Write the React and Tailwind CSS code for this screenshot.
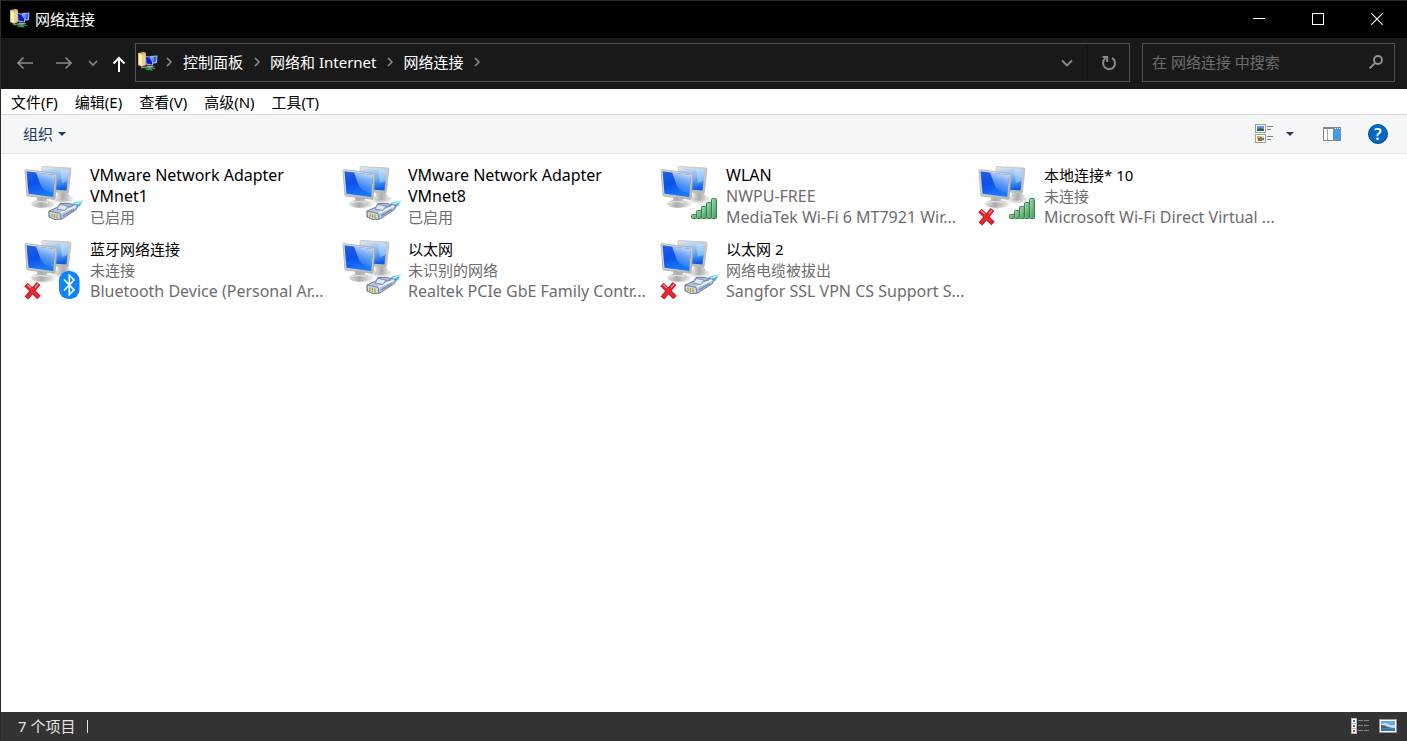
import React, { useState } from "react";
import clsx from "clsx";

const crumbs = ["控制面板", "网络和 Internet", "网络连接"];

const menus = ["文件(F)", "编辑(E)", "查看(V)", "高级(N)", "工具(T)"];

const connections = [
  { name: "VMware Network Adapter VMnet1", status: "已启用", badge: "cable" },
  { name: "VMware Network Adapter VMnet8", status: "已启用", badge: "cable" },
  { name: "WLAN", status: "NWPU-FREE", device: "MediaTek Wi-Fi 6 MT7921 Wir...", badge: "wifi" },
  { name: "本地连接* 10", status: "未连接", device: "Microsoft Wi-Fi Direct Virtual ...", badge: "wifi", off: true },
  { name: "蓝牙网络连接", status: "未连接", device: "Bluetooth Device (Personal Ar...", badge: "bluetooth", off: true },
  { name: "以太网", status: "未识别的网络", device: "Realtek PCIe GbE Family Contr...", badge: "cable" },
  { name: "以太网 2", status: "网络电缆被拔出", device: "Sangfor SSL VPN CS Support S...", badge: "cable", off: true },
];

// Latin-only lines are set one size up so they look as large as the Chinese ones
const textSize = (text) => (/^[\x20-\x7e]+$/.test(text) ? "text-[16px]" : "text-[15px]");

function IconDefs() {
  return (
    <svg width="0" height="0" className="absolute" aria-hidden="true">
      <defs>
        <linearGradient id="screen" x1="0" y1="0" x2="0.3" y2="1">
          <stop offset="0" stopColor="#2a62e0" />
          <stop offset="0.5" stopColor="#0a50ea" />
          <stop offset="1" stopColor="#1a78fa" />
        </linearGradient>
        <linearGradient id="screenBack" x1="0.2" y1="0" x2="0.4" y2="1">
          <stop offset="0" stopColor="#c6e0fa" />
          <stop offset="0.5" stopColor="#6fb0f4" />
          <stop offset="1" stopColor="#0c5ce8" />
        </linearGradient>
        <linearGradient id="shine" x1="0.3" y1="0" x2="0" y2="1">
          <stop offset="0" stopColor="#c4defb" stopOpacity="0.9" />
          <stop offset="0.5" stopColor="#7db4f8" stopOpacity="0.6" />
          <stop offset="1" stopColor="#3f8ffa" stopOpacity="0.1" />
        </linearGradient>
        <linearGradient id="frame" x1="0" y1="0" x2="1" y2="1">
          <stop offset="0" stopColor="#e6e6e4" />
          <stop offset="1" stopColor="#b4b4b4" />
        </linearGradient>
        <linearGradient id="stand" x1="0" y1="0" x2="1" y2="0">
          <stop offset="0" stopColor="#dedede" />
          <stop offset="0.5" stopColor="#acacac" />
          <stop offset="1" stopColor="#dadada" />
        </linearGradient>
        <linearGradient id="bar" x1="0" y1="0" x2="1" y2="1">
          <stop offset="0" stopColor="#a9dcb0" />
          <stop offset="1" stopColor="#3f9a5c" />
        </linearGradient>
        <radialGradient id="shadow">
          <stop offset="0" stopColor="#000" stopOpacity="0.35" />
          <stop offset="1" stopColor="#000" stopOpacity="0" />
        </radialGradient>
      </defs>
    </svg>
  );
}

function CableBadge() {
  return (
    <g strokeLinejoin="round">
      <path d="M46 43 L50 38.500 L59 36.500 L56 42 L50 46 Z" fill="#4db9dd" />
      <path d="M50 40.500 L58 37.500" stroke="#b8ecf8" strokeWidth="1.500" />
      <path d="M25 47 L34 43 L36 39.500 L45 39.500 L53.500 41.500 L52.500 45.500 L38 55 L31 55.500 L25 53 Z" fill="#b3c3df" stroke="#6e81a3" />
      <path d="M25 47 L36 49.500 L37 55 L31 55.500 L25.500 53 Z" fill="#d5dade" stroke="#75849e" />
      <path d="M36.500 49 L52 42" stroke="#f3f7fc" strokeWidth="1.500" />
      <path d="M33 45 L36 40.500 L44 42 L41 46.500 Z" fill="#dfe8f5" stroke="#7e90b0" />
      <path d="M39 52 L50 45.500 M44 43 L49 41.500" stroke="#7b92bd" strokeWidth="1.500" />
      <path d="M28 49.500 v3.500 M30.500 50 v4 M33 50.500 v4" stroke="#b5a63c" strokeWidth="1.400" />
    </g>
  );
}

function WifiBadge() {
  return (
    <g fill="url(#bar)" stroke="#35824e">
      <rect x="31.500" y="50.500" width="5" height="4" rx="1" />
      <rect x="36.500" y="46.500" width="5" height="8" rx="1" />
      <rect x="41.500" y="42.500" width="5" height="12" rx="1" />
      <rect x="46.500" y="38.500" width="5" height="16" rx="1" />
      <rect x="51.500" y="34.500" width="5" height="20" rx="1" />
    </g>
  );
}

function BluetoothBadge() {
  return (
    <g>
      <rect x="35" y="33" width="20.500" height="28" rx="9.500" fill="#0a84ff" />
      <path d="M40 41.500 L50 52 L45.300 56.500 V37.500 L50 42 L40 52.500" fill="none" stroke="#fff" strokeWidth="1.700" />
    </g>
  );
}

function ConnectionIcon({ badge, off }) {
  return (
    <svg viewBox="0 0 60 64" className="h-16 w-[60px] shrink-0" aria-hidden="true">
      <ellipse cx="39" cy="35" rx="12" ry="5" fill="url(#shadow)" />
      <path d="M33 27 L42 27 L46 32 Q43 36 34 35 Z" fill="url(#stand)" />
      <path d="M18 3.500 Q18 2.500 19 2.500 L46 4 Q47 4 47 5 L44.500 28 Q44.400 29 43.400 29 L20 27 Z" fill="url(#frame)" stroke="#b9b9b7" strokeWidth="0.700" />
      <path d="M19.500 4.500 L44.800 5.800 L42.500 26.500 L22 25 Z" fill="url(#screenBack)" />
      <path d="M36 5.400 L44.800 5.800 L43.500 17 L38 19 Z" fill="#e9f5ff" opacity="0.35" />
      <ellipse cx="20" cy="40" rx="13" ry="5" fill="url(#shadow)" />
      <path d="M13 33 L23 34 L23 37 Q30 39 26 42 Q20 45 11 43 Q4 40 9 37.500 L13 36 Z" fill="url(#stand)" />
      <path d="M8.500 39 Q15 36.500 24 38.500" fill="none" stroke="#efefef" />
      <path d="M1 6.500 Q1 5.500 2 5.600 L32 9.400 Q33.200 9.600 33 10.800 L31 34.400 Q30.900 35.500 29.800 35.300 L4 32 Q3 31.900 2.900 31 Z" fill="url(#frame)" stroke="#a9a9a7" strokeWidth="0.800" />
      <path d="M2.500 7.300 L31 11 L29.200 33 L4.500 29.800 Z" fill="url(#screen)" />
      <path d="M12 8.500 L31 11 L29.600 29 Q20 28 17 22 Z" fill="url(#shine)" />
      {badge === "cable" && <CableBadge />}
      {badge === "wifi" && <WifiBadge />}
      {badge === "bluetooth" && <BluetoothBadge />}
      {off && (
        <g>
          <path d="M2 46.500 L15 59.500 M14.500 45.500 L2.500 60" stroke="#b3171d" strokeWidth="4.800" />
          <path d="M2.500 47 L14.500 59 M14 46.200 L3 59.400" stroke="#e8262d" strokeWidth="3.400" />
          <path d="M3 46.500 L7 50 M14 46 L11 49.500" stroke="#f58a8a" strokeWidth="1.200" />
        </g>
      )}
    </svg>
  );
}

function FolderNetIcon() {
  return (
    <svg viewBox="0 0 20 20" className="h-5 w-5 shrink-0" aria-hidden="true">
      <path d="M0 1 L6 0 L8 1 V13 L4 15 L0 13 Z" fill="#d9b565" />
      <path d="M1 1.500 L4 3 V14 L1 12.500 Z" fill="#fbeeb8" />
      <path d="M4 3 L7 2 V12 L4 14 Z" fill="#ecd18a" />
      <path d="M12 4 L19.500 3.500 L19 11 L13 12 Z" fill="#a9b8d6" />
      <path d="M13 5 L18.500 4.500 L18 10 L13 11 Z" fill="#2f66e0" />
      <path d="M7 4 L15.500 5 L15 13.500 L7.500 12.500 Z" fill="#aab6d2" />
      <path d="M8 5 L14.500 6 L14 12.500 L8.500 11.500 Z" fill="#1416c4" />
      <path d="M11 5.500 L14.500 6 L14.200 10 Z" fill="#6aa0ff" />
      <path d="M9 13.500 L14 14 L17 15 L9 15 Z" fill="#a9adb3" />
      <path d="M3 16 L8 14.800 L17 16.500" fill="none" stroke="#7f9a90" strokeWidth="1.200" />
      <path d="M6 16.500 L13 16 L15 18.500 L9 18 Z" fill="#1fae4b" />
    </svg>
  );
}

function Chevron({ down }) {
  return (
    <svg viewBox="0 0 12 12" className={clsx("h-3 w-3", down && "rotate-90")} aria-hidden="true">
      <path d="M4 2 L8 6 L4 10" fill="none" stroke="#8a8a8a" strokeWidth="1.600" />
    </svg>
  );
}

function Arrow({ className }) {
  return (
    <svg viewBox="0 0 16 16" className={clsx("h-4 w-4", className)} fill="none" stroke="currentColor" strokeWidth="1.700" aria-hidden="true">
      <path d="M16 8 H1 M6.500 2.500 L1 8 L6.500 13.500" />
    </svg>
  );
}

function Triangle() {
  return (
    <svg viewBox="0 0 8 4" className="h-1 w-2" aria-hidden="true">
      <path d="M0 0 H8 L4 4 Z" fill="#1e395b" />
    </svg>
  );
}

function TitleBar() {
  const button = "flex h-full w-[59px] items-center justify-center hover:bg-[#2a2a2a]";
  return (
    <header className="flex h-[38px] items-center border-t border-[#262626] bg-black pr-px pb-[2px] pl-[9px] text-white">
      <FolderNetIcon />
      <h1 className="ml-[5px] flex-1">网络连接</h1>
      <button className={button} aria-label="最小化">
        <svg viewBox="0 0 12 12" className="h-3 w-3">
          <path d="M0 5.500 H12" stroke="#fff" />
        </svg>
      </button>
      <button className={button} aria-label="最大化">
        <svg viewBox="0 0 12 12" className="h-3 w-3">
          <rect x="0.500" y="0.500" width="11" height="11" fill="none" stroke="#fff" />
        </svg>
      </button>
      <button className={button} aria-label="关闭">
        <svg viewBox="0 0 12 12" className="h-3 w-3">
          <path d="M0.300 0.300 L11.700 11.700 M11.700 0.300 L0.300 11.700" stroke="#fff" strokeWidth="1.200" />
        </svg>
      </button>
    </header>
  );
}

function NavBar() {
  const [query, setQuery] = useState("");

  return (
    <nav className="flex h-[51px] items-center bg-[#191919] pr-3 pb-[2px] pl-1 text-white">
      <button className="flex h-10 w-[39px] items-center justify-center text-[#8a8a8a]" aria-label="后退">
        <Arrow />
      </button>
      <button className="flex h-10 w-[39px] items-center justify-center text-[#8a8a8a]" aria-label="前进">
        <Arrow className="rotate-180" />
      </button>
      <button className="flex h-10 w-5 items-center justify-center" aria-label="最近浏览的位置">
        <Chevron down />
      </button>
      <button className="flex h-10 w-8 items-center justify-center pt-[2px]" aria-label="上移">
        <svg viewBox="0 0 14 16" className="h-4 w-[14px]" fill="none" stroke="#fff" strokeWidth="2" aria-hidden="true">
          <path d="M7 16 V2 M1.500 7.500 L7 2 L12.500 7.500" />
        </svg>
      </button>
      <div className="flex h-[39px] min-w-0 flex-1 items-center border border-[#535353] pb-[2px] pl-[2px]">
        <FolderNetIcon />
        <span className="flex w-[25px] justify-center pr-[3px]">
          <Chevron />
        </span>
        {crumbs.map((crumb) => (
          <div key={crumb} className="flex items-center">
            <a href="#" className="whitespace-nowrap">
              {crumb}
            </a>
            <span className="flex w-[27px] justify-center">
              <Chevron />
            </span>
          </div>
        ))}
        <button className="ml-auto flex h-full w-10 items-center justify-center pt-[2px]" aria-label="以前的位置">
          <svg viewBox="0 0 12 12" className="h-3 w-3" aria-hidden="true">
            <path d="M1 3.500 L6 8.500 L11 3.500" fill="none" stroke="#8a8a8a" strokeWidth="1.800" />
          </svg>
        </button>
        <button className="flex h-full w-[42px] items-center justify-center border-l border-[#131313] pt-[2px]" aria-label="刷新">
          <svg viewBox="0 0 16 16" className="h-4 w-4" fill="none" stroke="#8a8a8a" strokeWidth="2" aria-hidden="true">
            <path d="M11 2.900 A6 6 0 1 1 4.500 3.300" />
            <path d="M1.500 2 H6.200 V7" />
          </svg>
        </button>
      </div>
      <label className="ml-3 flex h-[39px] w-[253px] items-center border border-[#535353] pr-[11px] pb-[2px] pl-[9px]">
        <input
          className="min-w-0 flex-1 bg-transparent outline-none placeholder:text-[#6d6d6d]"
          value={query}
          onChange={(e) => setQuery(e.target.value)}
          placeholder="在 网络连接 中搜索"
          aria-label="搜索"
        />
        <svg viewBox="0 0 14 14" className="h-[14px] w-[14px]" fill="none" stroke="#949494" strokeWidth="1.900" aria-hidden="true">
          <circle cx="9" cy="5" r="4" />
          <path d="M6.200 7.800 L0.700 13.300" />
        </svg>
      </label>
    </nav>
  );
}

function PictureIcon({ className }) {
  return (
    <svg viewBox="0 0 18 14" className={className} aria-hidden="true">
      <rect x="0.500" y="0.500" width="17" height="13" fill="#fff" stroke="#9a9a9a" />
      <rect x="2" y="2" width="14" height="10" fill="#6aa5e4" />
      <path d="M2 5 Q6 3 9 5 T16 6 V9 H2 Z" fill="#c5def2" />
      <path d="M2 6 Q6 6 9 8 L16 9.500 H2 Z" fill="#3f6b55" />
      <path d="M2 9.500 H16 V12 H2 Z" fill="#3a78ab" />
    </svg>
  );
}

function CommandBar() {
  return (
    <div className="flex h-10 items-center border-y border-t-[#d9d9d9] border-b-[#e5e6e8] bg-[#f5f6f7] pr-[19px] pl-[22px] text-[#1e395b]">
      <button className="flex items-center gap-[5px]">
        组织
        <Triangle />
      </button>
      <button className="ml-auto flex items-center gap-[13px]" aria-label="更改视图">
        <svg viewBox="0 0 18 20" className="h-5 w-[18px]" aria-hidden="true">
          <rect x="0.500" y="0.500" width="10" height="8" fill="#fff" stroke="#9c9c9c" />
          <rect x="2" y="2" width="7" height="5" fill="#5b9be0" />
          <path d="M2 5 L5 4 L9 5 V7 H2 Z" fill="#2d5f55" />
          <rect x="0.500" y="10.500" width="10" height="8" fill="#fff" stroke="#9c9c9c" />
          <rect x="2" y="12" width="7" height="5" fill="#d8d9a8" />
          <path d="M2 12 H5 V15 H2 Z" fill="#e2a24a" />
          <path d="M3 14 H5 V17 H3 Z" fill="#cf4a2e" />
          <path d="M5 13 H7 V17 H5 Z" fill="#4f9a40" />
          <path d="M7 14 H9 V16 H7 Z" fill="#4779c9" />
          <path d="M12 2.500 H18 M12 5.500 H16 M12 12.500 H18 M12 15.500 H16" stroke="#7d7d7d" />
        </svg>
        <Triangle />
      </button>
      <button className="ml-[29px] flex" aria-label="显示预览窗格">
        <svg viewBox="0 0 18 14" className="h-[14px] w-[18px]" aria-hidden="true">
          <rect x="0.500" y="0.500" width="17" height="13" fill="#fff" stroke="#868686" />
          <path d="M0 1 H18" stroke="#868686" strokeWidth="2" />
          <path d="M12 1.500 h1 M14 1.500 h1 M16 1.500 h1" stroke="#fff" />
          <path d="M4.500 2 V13" stroke="#a8a8a8" />
          <rect x="10" y="2" width="7" height="11" fill="#429ce3" />
        </svg>
      </button>
      <button
        className="ml-[27px] flex h-5 w-5 items-center justify-center rounded-full border border-[#0a4d8f] bg-[#0067c5] text-[16px] font-semibold text-white"
        aria-label="帮助"
      >
        ?
      </button>
    </div>
  );
}

function Connection({ name, status, device, badge, off }) {
  return (
    <li className="flex h-[74px] w-[318px] gap-[6px]">
      <ConnectionIcon badge={badge} off={off} />
      <div className="w-[240px] pt-px leading-[21px] text-[#6d6d6d]">
        <p className={clsx("pr-6 leading-[21px] text-black", textSize(name))}>{name}</p>
        <p className={clsx("leading-[21px]", textSize(status))}>{status}</p>
        {device && <p className={clsx("leading-[21px] whitespace-nowrap", textSize(device))}>{device}</p>}
      </div>
    </li>
  );
}

function StatusBar() {
  return (
    <footer className="flex h-[29px] items-center bg-[#333] pr-[10px] pb-px pl-[17px] text-[#e6e6e6]">
      <span>7 个项目</span>
      <span className="ml-3 h-[13px] w-px bg-[#e6e6e6]" />
      <button className="ml-auto flex" aria-label="详细信息">
        <svg viewBox="0 0 18 16" className="h-4 w-[18px]" aria-hidden="true">
          <rect width="6" height="16" fill="#b5b5b5" />
          <path d="M1 1 h4 v4 h-4 z M1 6 h4 v4 h-4 z M1 11 h4 v4 h-4 z" fill="#fff" />
          <rect x="2" y="2" width="2" height="2" fill="#2d73a8" />
          <rect x="2" y="7" width="2" height="2" fill="#8a5b4c" />
          <rect x="2" y="12" width="2" height="2" fill="#d0261e" />
          <path d="M7 2.500 h5 M13 2.500 h5 M7 7.500 h5 M13 7.500 h5 M7 12.500 h5 M13 12.500 h5" stroke="#858585" />
        </svg>
      </button>
      <button className="ml-[10px] flex" aria-label="大图标">
        <PictureIcon className="h-[14px] w-[18px]" />
      </button>
    </footer>
  );
}

export default function App() {
  return (
    <div className="flex min-h-screen flex-col border-l border-[#2b2b2b] bg-white font-['Noto_Sans','Noto_Sans_CJK_SC',sans-serif] text-[15px] leading-5">
      <IconDefs />
      <TitleBar />
      <NavBar />
      <div className="flex h-[25px] items-center gap-[17px] pl-[10px] text-black">
        {menus.map((menu) => (
          <button key={menu} className="whitespace-nowrap">
            {menu}
          </button>
        ))}
      </div>
      <CommandBar />
      <main className="flex-1 pt-[10px] pl-[23px]">
        <ul className="flex flex-wrap">
          {connections.map((item) => (
            <Connection key={item.name} {...item} />
          ))}
        </ul>
      </main>
      <StatusBar />
    </div>
  );
}
